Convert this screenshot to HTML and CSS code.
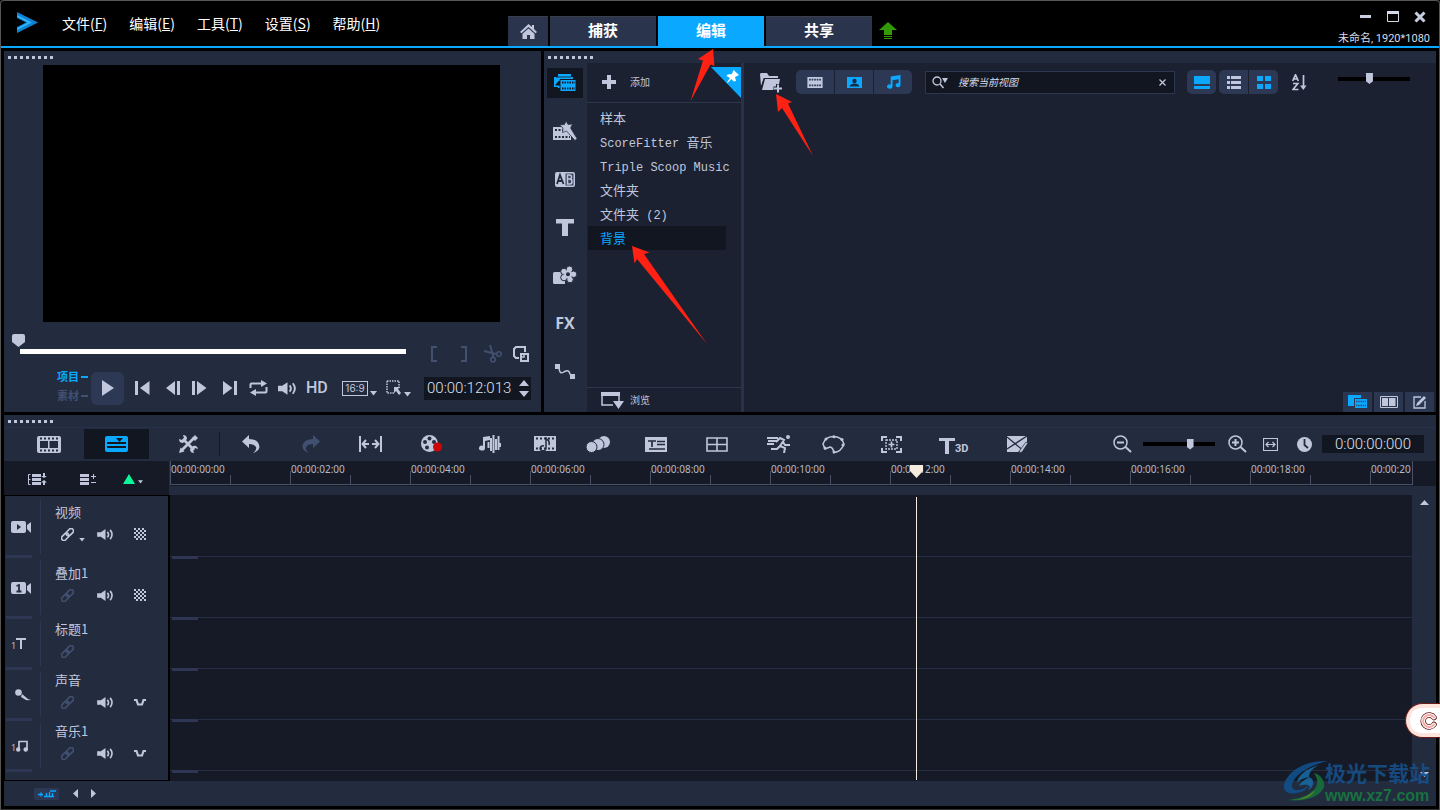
FILE: index.html
```html
<!DOCTYPE html>
<html lang="zh-CN">
<head>
<meta charset="utf-8">
<title>未命名</title>
<link rel="stylesheet" href="styles.css">
</head>
<body>
<svg class="defs" aria-hidden="true">
  <symbol id="link" viewBox="0 0 14 14"><g transform="rotate(-45 7 7)" fill="none" stroke="currentColor" stroke-width="1.8"><rect x="-1" y="4.400" width="9" height="5.200" rx="2.600"/><rect x="6" y="4.400" width="9" height="5.200" rx="2.600"/></g></symbol>
  <symbol id="sound" viewBox="0 0 18 14"><path d="M0 4.500h4L9 1v12L4 9.500H0z" fill="currentColor"/><path d="M11 4q2.500 3 0 6M14 2q4 5 0 10" fill="none" stroke="currentColor" stroke-width="1.800"/></symbol>
  <symbol id="checker" viewBox="0 0 12 12"><path fill="currentColor" d="M0 0h2v2H0zM4 0h2v2H4zM8 0h2v2H8zM2 2h2v2H2zM6 2h2v2H6zM10 2h2v2h-2zM0 4h2v2H0zM4 4h2v2H4zM8 4h2v2H8zM2 6h2v2H2zM6 6h2v2H6zM10 6h2v2h-2zM0 8h2v2H0zM4 8h2v2H4zM8 8h2v2H8zM2 10h2v2H2zM6 10h2v2H6zM10 10h2v2h-2z"/></symbol>
  <symbol id="duck" viewBox="0 0 12 8"><path d="M0 2h2.500L4 6.500h4L9.500 2H12" fill="none" stroke="currentColor" stroke-width="2.200"/></symbol>
  <symbol id="down" viewBox="0 0 7 5"><path d="M0 0h7L3.500 4.500z" fill="currentColor"/></symbol>
  <symbol id="film" viewBox="0 0 18 13"><path fill="currentColor" fill-rule="evenodd" d="M0 0h18v13H0zM2 2v2h2V2zm3 0v2h2V2zm3 0v2h2V2zm3 0v2h2V2zm3 0v2h2V2zM2 9v2h2V9zm3 0v2h2V9zm3 0v2h2V9zm3 0v2h2V9zm3 0v2h2V9z"/></symbol>
  <symbol id="note" viewBox="0 0 16 15"><path d="M5 1.500L15.500 0v11a2.600 2.300 0 1 1-2-2.300V4.500L7 5.500v7a3 2.300 0 1 1-2-2.300z" fill="currentColor"/></symbol>
  <symbol id="media" viewBox="0 0 24 20"><path d="M5 1h13v3h2v3H8v8H5l-.5-1H1V4h4z" fill="currentColor"/><path d="M2 12.500l3-4 2.500-1v5z" fill="#121620"/><path d="M3 4h15" stroke="#121620" stroke-width=".8"/><path d="M7 6.500h16v12H7z" fill="currentColor" stroke="#121620"/><path d="M9 9.500h13M9 15.500h13" stroke="#121620" stroke-width="2" stroke-dasharray="1.500 1"/></symbol>
</svg>

<div class="window">
  <header class="titlebar">
    <nav class="menus" aria-label="菜单">
      <svg class="logo" width="21" height="22" viewBox="0 0 21 22"><path d="M0 0l21 10.500L0 21v-6l9-4.500L0 6z" fill="#0d83d6"/><path d="M0 4l13 6.500L0 17" fill="none" stroke="#35b8ff" stroke-width="1.500"/></svg>
      <a href="#">文件(<u>F</u>)</a><a href="#">编辑(<u>E</u>)</a><a href="#">工具(<u>T</u>)</a><a href="#">设置(<u>S</u>)</a><a href="#">帮助(<u>H</u>)</a>
    </nav>
    <div class="tabs">
      <button class="tab tab-home" aria-label="主页"><svg width="17" height="15" viewBox="0 0 17 15"><path d="M8.500 0L12 3V1h2v4l3 3-1.500 1.300L8.500 3 1.500 9.300 0 8z" fill="#c0c7dd"/><path d="M8.500 4.500L14.500 9.800V15H10v-4H7v4H2.500V9.800z" fill="#c0c7dd"/></svg></button>
      <button class="tab">捕获</button><button class="tab tab-on">编辑</button><button class="tab">共享</button>
      <button class="update" aria-label="更新"><svg width="18" height="18" viewBox="0 0 18 18"><path d="M9 0l9 8h-5v5H5V8H0zM5 14h8v1H5zM5 16h8v1H5z" fill="#329a07"/></svg></button>
    </div>
    <div class="win-side">
      <div class="win-buttons">
        <button aria-label="最小化"><svg width="12" height="12"><path d="M0 4h11v3H0z" fill="#c8cee2"/></svg></button>
        <button aria-label="最大化"><svg width="12" height="12"><path d="M.5 2V10.500h11V2" fill="none" stroke="#d5daea"/><path d="M0 0h12v3H0z" fill="#d5daea"/></svg></button>
        <button aria-label="关闭"><svg width="12" height="12"><path d="M1.500 1.500l9 9m0-9l-9 9" stroke="#c8cee2" stroke-width="3"/></svg></button>
      </div>
      <div class="project">未命名, 1920*1080</div>
    </div>
  </header>

  <main class="top">
    <section class="panel preview">
      <div class="grip"></div>
      <div class="screen"></div>
      <div class="scrub">
        <input class="seek" type="range" min="0" max="100" value="0" aria-label="进度">
        <div class="marks">
          <button class="dim" aria-label="开始标记"><svg width="8" height="16"><path d="M6 1H1v14h5" fill="none" stroke="currentColor" stroke-width="2"/></svg></button>
          <button class="dim" aria-label="结束标记"><svg width="8" height="16"><path d="M1 1h5v14H1" fill="none" stroke="currentColor" stroke-width="2"/></svg></button>
          <button class="dim" aria-label="剪切"><svg width="18" height="18" fill="none" stroke="currentColor" stroke-width="2"><path d="M6 0l3.500 12M0 6l12 3"/><circle cx="9" cy="14.500" r="2.300" stroke-width="1.600"/><circle cx="15" cy="9" r="2.300" stroke-width="1.600"/></svg></button>
          <button aria-label="放大"><svg width="16" height="16" fill="none" stroke="currentColor" stroke-width="2"><path d="M6 12H3L1 10V3l2-2h9v5"/><path d="M8 8h7v7H8z"/><path d="M7 11h4V7" stroke-width="1.500"/></svg></button>
        </div>
      </div>
      <div class="transport">
        <div class="modes"><button class="mode on">项目</button><button class="mode">素材</button></div>
        <button class="play" aria-label="播放"><svg width="12" height="18"><path d="M0 1l12 8-12 8z" fill="currentColor"/></svg></button>
        <div class="deck">
          <button aria-label="起始"><svg width="15" height="14"><path d="M0 0h3v14H0zM14.500 0v14L5 7z" fill="currentColor"/></svg></button>
          <button aria-label="上一帧"><svg width="15" height="14"><path d="M9 0v14L0 7zM11 0h3v14h-3z" fill="currentColor"/></svg></button>
          <button aria-label="下一帧"><svg width="15" height="14"><path d="M0 0h3v14H0zM5 0v14l9.500-7z" fill="currentColor"/></svg></button>
          <button aria-label="结束"><svg width="15" height="14"><path d="M0 0v14l9.500-7zM11 0h3v14h-3z" fill="currentColor"/></svg></button>
          <button aria-label="重复"><svg width="19" height="16"><path d="M1.500 8V4.500q0-1 1-1H13M17.500 7v4.500q0 1-1 1H5" fill="none" stroke="currentColor" stroke-width="2"/><path d="M12 0l6 3.500-6 3.500zM7 9v7l-6-3.500z" fill="currentColor"/></svg></button>
          <button aria-label="音量"><svg width="19" height="15"><use href="#sound"/></svg></button>
          <button class="hd">HD</button>
          <button class="ratio"><span>16:9</span><svg width="7" height="5"><use href="#down"/></svg></button>
          <button class="pick" aria-label="选取"><svg width="16" height="17"><path d="M1 1h12v7M1 1v12h8" fill="none" stroke="currentColor" stroke-width="1.500" stroke-dasharray="1.500 1"/><path d="M8 7h6l-2 2 3 4-2 2-3-4-2 2z" fill="currentColor"/></svg><svg width="7" height="5"><use href="#down"/></svg></button>
          <div class="timebox"><input type="text" value="00:00:12:013" aria-label="时间码"><button class="spin" aria-label="调整"><svg width="10" height="17"><path d="M5 0l5 6H0zM0 11h10l-5 6z" fill="currentColor"/></svg></button></div>
        </div>
      </div>
    </section>

    <section class="panel library">
      <div class="grip"></div>
      <div class="lib-body">
        <nav class="kinds" aria-label="素材类型">
          <button class="kind kind-on" aria-label="媒体"><svg width="24" height="20"><use href="#media"/></svg></button>
          <button class="kind" aria-label="即时项目"><svg width="24" height="20"><path d="M0 6h18v13H0z" fill="currentColor"/><path d="M2 9h8M2 16h15" stroke="#232b3f" stroke-width="2" stroke-dasharray="2 1.500"/><path d="M13 0l2 3.500 4.500-.5-2 4 6.500 10.500-2 2-8.500-9.500-4 1.500.5-4.500L6.500 4l5-.5z" fill="currentColor" stroke="#232b3f" stroke-width=".7"/></svg></button>
          <button class="kind" aria-label="转场"><svg width="20" height="15"><path d="M2 0h16q2 0 2 2v11q0 2-2 2H2q-2 0-2-2V2q0-2 2-2z" fill="currentColor"/><path d="M10.500 1.500H18q.5 0 .5.500v11q0 .5-.5.500h-7.500z" fill="#39435d"/><path d="M2 12L5 3l3.500 9M3 9h4.500" fill="none" stroke="#232b3f" stroke-width="1.800"/><path d="M12.500 3v9h2.500q2 0 2-2.500T15 7q1.500 0 1.500-2T14.500 3zM12.500 7H15" fill="none" stroke="currentColor" stroke-width="1.500"/></svg></button>
          <button class="kind" aria-label="标题"><svg width="18" height="17"><path d="M0 0h18v4.500h-6V17H6V4.500H0z" fill="currentColor"/></svg></button>
          <button class="kind" aria-label="图形"><svg width="24" height="18"><path d="M1.500 6H12v12H1.500Q0 18 0 16.500v-9Q0 6 1.500 6z" fill="currentColor"/><g fill="currentColor" stroke="#232b3f" stroke-width="1"><circle cx="11" cy="5.500" r="3.300"/><circle cx="16.500" cy="3.300" r="3.300"/><circle cx="20.500" cy="8.300" r="3.300"/><circle cx="17" cy="13.500" r="3.300"/><circle cx="11" cy="11.500" r="3.300"/></g><circle cx="15" cy="8.300" r="4.300" fill="currentColor"/><circle cx="15" cy="8.300" r="2" fill="#232b3f"/></svg></button>
          <button class="kind fx">FX</button>
          <button class="kind" aria-label="路径"><svg width="20" height="15"><path d="M0 0h5v5H0zM15 10h5v5h-5z" fill="currentColor"/><path d="M4 4c1 8 4 4 7 3s3 1 5 5" fill="none" stroke="currentColor" stroke-width="1.500"/></svg></button>
        </nav>
        <div class="folders">
          <div class="add-row"><button class="add"><svg width="14" height="14"><path d="M5 0h4v5h5v4H9v5H5V9H0V5h5z" fill="currentColor"/></svg>添加</button>
            <button class="pin" aria-label="固定"><svg width="30" height="31"><path d="M0 0h30v31z" fill="#0aa8ff"/><path d="M22.500 3l5.500 5-2 1-2 1 1 4-2.500.5-2-2.500-4 4-.5-.5L19 11l-3.500-2 1-1.500 4.500-.5z" fill="#fff"/></svg></button></div>
          <ul class="folder-list">
            <li><a href="#">样本</a></li>
            <li><a href="#"><span>ScoreFitter </span>音乐</a></li>
            <li><a href="#"><span>Triple Scoop Music</span></a></li>
            <li><a href="#">文件夹</a></li>
            <li><a href="#">文件夹<span> (2)</span></a></li>
            <li class="chosen"><a href="#">背景</a></li>
          </ul>
          <button class="browse"><svg width="23" height="17"><path d="M1 3v10h11M18 3v6" fill="none" stroke="currentColor" stroke-width="1.500"/><path d="M0 0h19v4H0zM12 9h11l-5.500 8z" fill="currentColor"/></svg>浏览</button>
        </div>
        <div class="content">
          <div class="lib-tools">
            <button class="import" aria-label="导入媒体文件"><svg width="23" height="23"><path d="M1 14L0 2l1-1h6l2 3h9v2H4z" fill="currentColor"/><path d="M5 7h15l-2 11H2z" fill="currentColor"/><path d="M1 17L4 6.500h16" fill="none" stroke="#1b2130"/><path d="M18 12v9M13.500 16.500h9" stroke="#1b2130" stroke-width="4"/><path d="M18 12.500v8M14 16.500h8" stroke="currentColor" stroke-width="2"/></svg></button>
            <div class="group filters">
              <button aria-label="视频"><svg width="16" height="11"><use href="#film"/></svg></button>
              <button class="blue" aria-label="照片"><svg width="15" height="11"><path d="M0 0h15v11H0z" fill="currentColor"/><circle cx="7.500" cy="4" r="2.200" fill="#1d2b45"/><path d="M2.500 9.500q1-3 5-3t5 3z" fill="#1d2b45"/></svg></button>
              <button class="blue" aria-label="音频"><svg width="15" height="14"><use href="#note"/></svg></button>
            </div>
            <label class="search"><svg width="17" height="13"><circle cx="5" cy="5" r="4" fill="none" stroke="#c0c7dd" stroke-width="1.300"/><path d="M8 8l3.500 4" stroke="#c0c7dd" stroke-width="1.500"/><path d="M10 2h6l-3 5z" fill="#c0c7dd"/></svg><input type="text" placeholder="搜索当前视图" aria-label="搜索当前视图"><button aria-label="清除"><svg width="7" height="7"><path d="M.5.5l6 6m0-6l-6 6" stroke="#c0c7dd" stroke-width="1.300"/></svg></button></label>
            <div class="group views-a"><button class="blue" aria-label="隐藏标题"><svg width="16" height="13"><path d="M0 0h16v8H0zM0 10h16v3H0z" fill="currentColor"/></svg></button></div>
            <div class="group views"><button aria-label="列表视图"><svg width="14" height="13"><path d="M0 0h3v3H0zM4 0h10v3H4zM0 5h3v3H0zM4 5h10v3H4zM0 10h3v3H0zM4 10h10v3H4z" fill="currentColor"/></svg></button><button class="blue" aria-label="缩略图视图"><svg width="14" height="13"><path d="M0 0h6v5H0zM8 0h6v5H8zM0 8h6v5H0zM8 8h6v5H8z" fill="currentColor"/></svg></button></div>
            <button class="sort" aria-label="排序"><svg width="15" height="17" fill="none" stroke="currentColor" stroke-width="1.700"><path d="M.7 7L3.500.8 6.300 7M1.500 5h4M1 9.500h4.800L1 15.500h5.500M11.500 1v12"/><path d="M8 11.500h6.500L11.300 16z" fill="currentColor" stroke="none"/></svg></button>
            <input class="slider size" type="range" min="0" max="100" value="43" aria-label="缩略图大小">
          </div>
          <div class="lib-tabs">
            <button class="blue" aria-label="素材库"><svg width="20" height="15"><path d="M0 0h13v5H6v6H0z" fill="currentColor"/><path d="M6.500 3.500h13v10h-13z" fill="currentColor" stroke="#2b3650"/><path d="M8 6.500h10M8 10.500h10" stroke="#25557f" stroke-width="1.500" stroke-dasharray="1.500 .7"/></svg></button>
            <button aria-label="双栏"><svg width="18" height="12"><path d="M.5.500h17v11H.5z" fill="none" stroke="currentColor"/><path d="M2 2h6v8H2zM9 2h6.500v8H9z" fill="currentColor"/></svg></button>
            <button aria-label="选项"><svg width="13" height="13"><path d="M8 1H1v11h11V5" fill="none" stroke="currentColor" stroke-width="1.300"/><path d="M3 10l1-3 7-7 2 2-7 7z" fill="currentColor"/></svg></button>
          </div>
        </div>
      </div>
    </section>
  </main>

  <section class="panel timeline">
    <div class="grip"></div>
    <div class="toolbar">
      <button class="story" aria-label="故事板视图"><svg width="24" height="17"><path fill="currentColor" d="M2 0h20q2 0 2 2v13q0 2-2 2H2q-2 0-2-2V2q0-2 2-2z"/><path fill="#232b3f" d="M3 5h8v7H3zM12.500 5H21v7h-8.500z"/><path d="M3 2.500h19M3 14.500h19" stroke="#232b3f" stroke-width="2" stroke-dasharray="2 2"/></svg></button>
      <button class="timeline-view blue" aria-label="时间轴视图"><svg width="23" height="16"><path fill="currentColor" d="M2 0h19q2 0 2 2v12q0 2-2 2H2q-2 0-2-2V2q0-2 2-2z"/><path d="M2 7h19M2 11h19" stroke="#121620" stroke-width="2"/><path d="M11 2h7l-3.500 4z" fill="#121620"/></svg></button>
      <button class="custom" aria-label="自定义工具栏"><svg width="19" height="18"><path d="M4 4l11 11M15 3L3 15" stroke="currentColor" stroke-width="2.800"/><path d="M4 0l1 3-2 2-3-1Q0 8 4 8l4-4Q8 0 4 0zM11 14q0 4 4 4l-1-3 2-2 3 1Q18 10 14 11zM13 3l3-3 3 3-3 3zM0 18l1.500-5.500 4 4z" fill="currentColor"/></svg></button>
      <div class="tools">
        <button aria-label="撤销"><svg width="18" height="18"><path d="M0 6.500L7 0v4q10 0 10.500 8-.5 4-6.500 6 4-3 3-6-2-3-7-3v4z" fill="currentColor"/></svg></button>
        <button class="dim" aria-label="重复"><svg width="18" height="18"><path d="M18 6.500L11 0v4Q1 4 .5 12q.5 4 6.500 6-4-3-3-6 2-3 7-3v4z" fill="currentColor"/></svg></button>
        <button aria-label="适应宽度"><svg width="23" height="16"><path d="M1 0v16M22 0v16M3 8h7M13 8h7" stroke="currentColor" stroke-width="2"/><path d="M7 4L3.500 8 7 12M16 4l3.500 4L16 12" fill="none" stroke="currentColor" stroke-width="2"/></svg></button>
        <button aria-label="录制/捕获选项"><svg width="22" height="18"><circle cx="8.500" cy="8.500" r="8.500" fill="currentColor"/><g fill="#232b3f"><circle cx="8.500" cy="3.500" r="2"/><circle cx="4" cy="7" r="2"/><circle cx="13" cy="7" r="2"/><circle cx="6" cy="12.500" r="2"/></g><circle cx="16.500" cy="12" r="4.500" fill="#cc0606"/></svg></button>
        <button aria-label="混音器"><svg width="23" height="18"><path d="M5 2l7-1v4L7 6v7a3 2.500 0 1 1-2-2.300z" fill="currentColor"/><path d="M10.500 7v6M13 3v13M15.500 0v18M18 4v11M20.500 1v14M22.500 8v4" stroke="currentColor" stroke-width="2"/></svg></button>
        <button aria-label="自动音乐"><svg width="22" height="16"><path d="M0 0h22v15H0z" fill="currentColor"/><path d="M2 2.500h18M2 12.500h18" stroke="#232b3f" stroke-width="2" stroke-dasharray="2 2"/><path d="M12 1v11a3 2.500 0 1 1-2-2M12 3q4 1 3 6" fill="none" stroke="#232b3f" stroke-width="1.500"/></svg></button>
        <button aria-label="运动追踪"><svg width="24" height="17"><circle cx="18" cy="6" r="6" fill="currentColor"/><circle cx="12" cy="8.500" r="6" fill="currentColor" stroke="#232b3f"/><circle cx="5.500" cy="11" r="5.500" fill="currentColor" stroke="#232b3f"/></svg></button>
        <button aria-label="字幕编辑器"><svg width="22" height="15"><path d="M0 0h22v15H0z" fill="currentColor"/><path d="M3 4h8M7 4v6M12 4.500h8M12 7.500h8M4 12h16" stroke="#232b3f" stroke-width="1.700"/></svg></button>
        <button aria-label="多相机编辑器"><svg width="22" height="15"><path d="M1 1h20v13H1zM1 7.500h20M11 1v13" fill="none" stroke="currentColor" stroke-width="1.600"/></svg></button>
        <button aria-label="重新映射时间"><svg width="24" height="18"><circle cx="21" cy="2" r="2" fill="currentColor"/><path d="M0 3h11M1 6h9M0 9h7M9 7l4-4 4 2-4 6 5 2-1 5M13 11l-3 3H4M16 7l2 3h5" fill="none" stroke="currentColor" stroke-width="2"/></svg></button>
        <button aria-label="遮罩创建器"><svg width="23" height="19"><path d="M3 14L1 9q2-7 10-7.500 9 0 11 7.500-3 8-10 8.500-1-5-4-5.500z" fill="none" stroke="currentColor" stroke-width="1.500"/><g fill="currentColor"><circle cx="3" cy="13" r="1.500"/><circle cx="4" cy="4" r="1.500"/><circle cx="12" cy="1.800" r="1.500"/><circle cx="20" cy="4.500" r="1.500"/><circle cx="21" cy="10" r="1.500"/><circle cx="12" cy="17" r="1.500"/></g></svg></button>
        <button aria-label="平移和缩放"><svg width="21" height="17"><path d="M1 5V1h5M15 1h5v4M20 12v4h-5M6 16H1v-4" fill="none" stroke="currentColor" stroke-width="2"/><path d="M5 4h11v9H5z" fill="none" stroke="currentColor" stroke-width="1.400" stroke-dasharray="2 1"/><path d="M7.500 8.500h6M10.500 5.500v6" stroke="currentColor" stroke-width="1.700"/></svg></button>
        <button class="t3d" aria-label="3D 标题编辑器"><svg width="16" height="16"><path d="M0 0h16v3h-6v13H6V3H0z" fill="currentColor"/></svg><span>3D</span></button>
        <button aria-label="分屏模板创建器"><svg width="23" height="17"><path d="M0 0h20v8l-9 8H0z" fill="currentColor"/><path d="M0 1l18 15M20 0L0 13" stroke="#232b3f" stroke-width="1.300"/><path d="M21 7l-6 9-3 1 1-3 6-8z" fill="currentColor" stroke="#232b3f" stroke-width=".7"/></svg></button>
      </div>
      <div class="zoomers">
        <button aria-label="缩小"><svg width="19" height="18" fill="none" stroke="currentColor"><circle cx="7.500" cy="7.500" r="6.500" stroke-width="1.500"/><path d="M4 7.500h7" stroke-width="2"/><path d="M12.500 12l5.500 5" stroke-width="2"/></svg></button>
        <input class="slider" type="range" min="0" max="100" value="67" aria-label="缩放">
        <button aria-label="放大"><svg width="19" height="18" fill="none" stroke="currentColor"><circle cx="7.500" cy="7.500" r="6.500" stroke-width="1.500"/><path d="M4 7.500h7M7.500 4v7" stroke-width="2"/><path d="M12.500 12l5.500 5" stroke-width="2"/></svg></button>
        <button aria-label="将项目调到时间轴窗口大小"><svg width="15" height="13"><path d="M.5.500h14v12H.5zM3 6.500h9M5.500 4L3 6.500 5.500 9M9.500 4L12 6.500 9.500 9" fill="none" stroke="currentColor" stroke-width="1.200"/></svg></button>
        <button class="clock" aria-label="项目区间"><svg width="15" height="15"><circle cx="7.500" cy="7.500" r="7.500" fill="currentColor"/><path d="M7.500 2v6l3.500 3" fill="none" stroke="#232b3f" stroke-width="1.800"/></svg></button>
        <input class="duration" type="text" value="0:00:00:000" aria-label="项目区间">
      </div>
    </div>

    <div class="ruler-row">
      <div class="track-tools">
        <button aria-label="显示全部可视化轨道"><svg width="20" height="13"><path d="M4 1h9v3H4zM4 5h9v3H4zM4 9h9v3H4zM16 5l-3-2h2V0h2v3h2zM16 7l3 2.500h-2V12h-2V9.500h-2z" fill="currentColor"/><path d="M2.500 1.500h-2v10h2M.5 6.500h2" fill="none" stroke="currentColor"/></svg></button>
        <button aria-label="添加/减少轨道"><svg width="17" height="13"><path d="M0 1h9v3H0zM0 5h9v3H0zM0 9h9v3H0z" fill="currentColor"/><path d="M11 3.500h5M13.500 1v5M11 9.500h5" stroke="currentColor"/></svg></button>
        <button class="marker" aria-label="章节点"><svg width="12" height="10"><path d="M6 0l6 10H0z" fill="#0cf79a"/></svg><svg width="5" height="4"><use href="#down"/></svg></button>
      </div>
      <div class="ruler-wrap">
        <div class="ruler"><span>00:00:00:00</span><span>00:00:02:00</span><span>00:00:04:00</span><span>00:00:06:00</span><span>00:00:08:00</span><span>00:00:10:00</span><span>00:00:12:00</span><span>00:00:14:00</span><span>00:00:16:00</span><span>00:00:18:00</span><span>00:00:20</span></div>
      </div>
    </div>

    <div class="tracks">
      <div class="heads">
        <div class="head tall"><div class="type"><svg width="21" height="12"><path d="M2 0h11q2 0 2 2v8q0 2-2 2H2q-2 0-2-2V2q0-2 2-2zM20 1v11l-4-4V4z" fill="currentColor"/><path d="M6 3l4 3-4 3z" fill="#232b3f"/></svg></div>
          <div class="info"><div>视频</div><div class="switches"><button class="with-arrow" aria-label="链接"><svg width="13" height="13"><use href="#link"/></svg><svg width="6" height="4"><use href="#down"/></svg></button><button aria-label="静音"><svg width="17" height="13"><use href="#sound"/></svg></button><button aria-label="透明度"><svg width="12" height="12"><use href="#checker"/></svg></button></div></div></div>
        <div class="head tall"><div class="type"><svg width="21" height="12"><path d="M2 0h11q2 0 2 2v8q0 2-2 2H2q-2 0-2-2V2q0-2 2-2zM20 1v11l-4-4V4z" fill="currentColor"/><path d="M5.500 4L8 3v7M5.500 9.500h5" fill="none" stroke="#232b3f" stroke-width="1.800"/></svg></div>
          <div class="info"><div>叠加1</div><div class="switches"><button class="dim" aria-label="链接"><svg width="13" height="13"><use href="#link"/></svg></button><button aria-label="静音"><svg width="17" height="13"><use href="#sound"/></svg></button><button aria-label="透明度"><svg width="12" height="12"><use href="#checker"/></svg></button></div></div></div>
        <div class="head"><div class="type"><small>1</small><svg width="10" height="11"><path d="M0 0h10v2H6v9H4V2H0z" fill="currentColor"/></svg></div>
          <div class="info"><div>标题1</div><div class="switches"><button class="dim" aria-label="链接"><svg width="13" height="13"><use href="#link"/></svg></button></div></div></div>
        <div class="head"><div class="type mic"><svg width="17" height="12"><circle cx="3.500" cy="3.500" r="3.300" fill="currentColor"/><path d="M7 5l6 5q2 1 3.500 0-2 2-6 .7L6 8z" fill="currentColor"/></svg></div>
          <div class="info"><div>声音</div><div class="switches"><button class="dim" aria-label="链接"><svg width="13" height="13"><use href="#link"/></svg></button><button aria-label="静音"><svg width="17" height="13"><use href="#sound"/></svg></button><button aria-label="闪避"><svg width="12" height="8"><use href="#duck"/></svg></button></div></div></div>
        <div class="head"><div class="type"><small>1</small><svg width="12" height="12"><path d="M3 1.500h8v8.500M3 1v9" fill="none" stroke="currentColor" stroke-width="1.700"/><circle cx="2.200" cy="9.500" r="2.200" fill="currentColor"/><circle cx="9.700" cy="9.500" r="2.200" fill="currentColor"/></svg></div>
          <div class="info"><div>音乐1</div><div class="switches"><button class="dim" aria-label="链接"><svg width="13" height="13"><use href="#link"/></svg></button><button aria-label="静音"><svg width="17" height="13"><use href="#sound"/></svg></button><button aria-label="闪避"><svg width="12" height="8"><use href="#duck"/></svg></button></div></div></div>
      </div>
      <div class="lanes"><div class="lane tall"></div><div class="lane tall"></div><div class="lane"></div><div class="lane"></div><div class="lane"></div></div>
      <div class="vscroll"><button aria-label="向上"><svg width="9" height="5"><path d="M4.500 0L9 5H0z" fill="currentColor"/></svg></button><button aria-label="向下"><svg width="9" height="5"><path d="M0 0h9L4.500 5z" fill="currentColor"/></svg></button></div>
      <svg class="playhead" width="13" height="315"><path d="M0 0h13v6l-6.500 7L0 6zM6 32h1v283H6z" fill="#f5ecdf"/></svg>
    </div>

    <div class="footer">
      <button class="auto" aria-label="自动滚动"><svg width="18" height="8"><path d="M0 4.500h5M3 2.500v4M6 6.500h10M8.500 3v4M11.500 2v5M14.500 3v4M12 1h6" fill="none" stroke="#0aa8ff" stroke-width="1.300"/></svg></button>
      <button aria-label="向左"><svg width="5" height="9"><path d="M5 0v9L0 4.500z" fill="currentColor"/></svg></button>
      <button aria-label="向右"><svg width="5" height="9"><path d="M0 0v9l5-4.500z" fill="currentColor"/></svg></button>
    </div>
  </section>
</div>

<svg class="arrows" width="1440" height="810" aria-hidden="true"><g fill="#ff2113"><path d="M713 49L698 59l5 1.500L690.500 101 710.500 64.500l4 1.500z"/><path d="M776 94l16 8-4 1.500L813 156l-31-48-4 4z"/><path d="M632 246l17.500 6.500-5.500 1.500 63 90-70-85-2.500 4.500z"/></g></svg>

<div class="watermark">
  <svg width="46" height="42" viewBox="0 0 46 42"><path d="M45 1C25 0 6 9 1 24c-1 8 5 11 13 9 6-1 11-4 11-8-3 5-16 8-16 1C10 15 27 5 45 1z" fill="#11508a"/><path d="M36 5C22 9 14 17 14 23q4-5 13-6c-6 3-9 5-11 9 9-3 14 0 8 5 8-4 8-12 2-14 0-5 4-9 10-12z" fill="#1768a0"/><path d="M31 13c8 2 11 9 10 14-4 10-19 15-37 13 15-1 29-8 30-16 1-4-1-8-3-11z" fill="#16703c"/><path d="M7 40c12 0 20-4 25-10-3 6-9 10-25 10z" fill="#8a9b17"/></svg>
  <div><strong>极光下载站</strong><span>www.xz7.com</span></div>
</div>
<button class="bubble" aria-label="助手"><svg width="18" height="20" fill="none" stroke-linecap="round"><path d="M14 6.500a6 6 0 1 0 0 7" stroke="#5d1616" stroke-width="5.500"/><path d="M14 6.500a6 6 0 1 0 0 7" stroke="#fff" stroke-width="4"/><path d="M14 6.500a6 6 0 1 0 0 7" stroke="#f5a9a4" stroke-width="2"/></svg></button>
</body>
</html>
```
FILE: styles.css
```css
:root {
  --panel: #232b3f;
  --dark: #1b2130;
  --deep: #151a26;
  --well: #121620;
  --raised: #2d3854;
  --icon: #c0c7dd;
  --blue: #0aa8ff;
  --faint: #42506f;
}
* { box-sizing: border-box; }
body {
  margin: 0;
  background: #000;
  color: var(--icon);
  font: 12px/16px "Noto Sans", "Noto Sans CJK SC", sans-serif;
  position: relative;
  overflow: hidden;
}
button, input { font: inherit; color: inherit; }
button { background: none; border: 0; padding: 0; display: flex; align-items: center; }
button.dim { color: var(--faint); }
button.blue { color: var(--blue); }
input { min-width: 0; border: 0; padding: 0; outline: 0; background: none; }
a { color: inherit; text-decoration: none; }
svg { display: block; flex: none; }
.defs { position: absolute; width: 0; height: 0; }

.window {
  min-height: 100vh;
  display: flex;
  flex-direction: column;
  border: 1px solid #555;
  border-bottom-color: #333;
  border-radius: 4px 4px 0 0;
  padding: 0 3px 3px;
}
.titlebar {
  display: grid;
  grid-template-columns: 504px auto 1fr;
  height: 47px;
  margin: 0 -3px 3px;
  padding-left: 3px;
  border-bottom: 2px solid var(--blue);
}
.menus { display: flex; align-items: flex-start; gap: 22px; padding: 11px 0 0 13px; color: #fff; font: 14px/22px "Noto Sans CJK SC", sans-serif; }
.menus .logo { margin-right: 2px; }
.menus a { white-space: nowrap; }
.tabs { display: flex; align-items: flex-end; gap: 2px; }
.tab { width: 106px; height: 30px; justify-content: center; background: #2a344c; color: #fff; font: bold 15px/22px "Noto Sans CJK SC", sans-serif; border-top: 1px solid #3b3f49; padding-bottom: 4px; }
.tab-home { width: 40px; padding-bottom: 0; }
.tab-on { background: var(--blue); border-color: var(--blue); }
.update { height: 30px; padding-left: 5px; }
.win-side { display: flex; flex-direction: column; align-items: flex-end; padding: 10px 9px 0 0; gap: 9px; }
.win-buttons { display: flex; gap: 15px; padding-right: 4px; }
.project { color: #d7dbe6; font: 11px/14px Roboto, "Noto Sans CJK SC", sans-serif; }

.top { display: grid; grid-template-columns: 537fr 892fr; gap: 3px; height: 361px; margin-bottom: 3px; }
.panel { background: var(--panel); display: flex; flex-direction: column; min-width: 0; }
.grip { flex: none; height: 12px; padding: 5px 4px; }
.grip::before { content: ""; display: block; width: 45px; height: 3px; background: repeating-linear-gradient(90deg, var(--icon) 0 3px, transparent 3px 6px); }

.screen { flex: 1; margin: 2px 41px 0 39px; background: #000; }
.scrub { display: flex; height: 42px; padding: 12px 12px 0 8px; }
.seek { flex: 1; appearance: none; height: 20px; margin: 0 18px 0 0; background: linear-gradient(#fff, #fff) 8px 15px / calc(100% - 8px) 5px no-repeat; }
.seek::-webkit-slider-runnable-track { height: 20px; }
.seek::-webkit-slider-thumb { appearance: none; width: 13px; height: 13px; border-radius: 2px; background: var(--icon); clip-path: polygon(0 0, 100% 0, 100% 62%, 50% 100%, 0 62%); }
.marks { display: grid; grid-template-columns: 29px 24px 29px 16px; margin-left: 7px; padding-top: 11px; height: 28px; align-items: center; }
.transport { display: flex; align-items: center; height: 48px; padding: 0 10px 0 53px; }
.modes { width: 34px; display: flex; flex-direction: column; gap: 2px; padding-bottom: 4px; }
.mode { font: bold 11px/17px "Noto Sans CJK SC", sans-serif; color: var(--faint); white-space: nowrap; gap: 2px; }
.mode::after { content: ""; width: 7px; height: 2px; background: currentColor; }
.mode.on { color: var(--blue); }
.play { width: 33px; height: 33px; border-radius: 6px; background: var(--raised); justify-content: center; }
.deck { display: grid; grid-template-columns: 31px 26px 31px 26px 29px 28px 36px 44px 38px 107px; align-items: center; margin-left: 11px; }
.hd { font: 500 16px/18px Roboto, sans-serif; }
.ratio { gap: 2px; align-items: flex-end; }
.ratio span { border: 1px solid var(--icon); font: 10px/13px Inter, sans-serif; width: 26px; text-align: center; }
.pick { gap: 2px; align-items: flex-end; }
.timebox { display: flex; height: 23px; background: var(--well); padding: 0 2px 0 3px; font: 300 15px/23px Roboto, sans-serif; }
.timebox input { flex: 1; }
.spin { padding-left: 2px; }
.timebox input, .duration { color: #dfe3f0; }

.lib-body { flex: 1; display: grid; grid-template-columns: 43px 157px 1fr; min-height: 0; }
.kinds { padding: 5px 3px; display: flex; flex-direction: column; gap: 18px; }
.kind { width: 36px; height: 30px; justify-content: center; }
.kind-on { background: var(--well); color: var(--blue); }
.fx { font: bold 16px/20px "Open Sans", sans-serif; }
.folders { background: var(--dark); border-right: 3px solid #29324a; display: flex; flex-direction: column; }
.add-row { display: flex; justify-content: space-between; height: 40px; border-bottom: 1px solid #2c3549; padding-left: 15px; }
.add { gap: 14px; font: 10px/16px "Noto Sans CJK SC", sans-serif; height: 37px; }
.pin { align-items: flex-start; padding-top: 4px; }
.folder-list { flex: 1; list-style: none; margin: 3px 0 0; padding: 0 15px 0 1px; font: 13px/24px "Noto Sans CJK SC", sans-serif; }
.folder-list li { padding-left: 12px; height: 24px; white-space: pre; }
.folder-list a { display: block; }
.folder-list span { font: 12px/24px "Liberation Mono", monospace; }
.folder-list .chosen { background: var(--well); color: var(--blue); }
.browse { border-top: 1px solid #2c3549; height: 25px; padding-left: 14px; gap: 6px; font: 10px/16px "Noto Sans CJK SC", sans-serif; }
.content { background: var(--dark); display: flex; flex-direction: column; justify-content: space-between; min-width: 0; }
.lib-tools { display: flex; align-items: center; padding: 7px 26px 0 16px; height: 31px; }
.import { width: 36px; padding-top: 2px; }
.group { display: flex; gap: 1px; height: 24px; border-radius: 5px; overflow: hidden; }
.group button { width: 29px; justify-content: center; background: var(--raised); }
.group.filters button { width: 38px; }
.search { flex: 1; display: flex; align-items: center; height: 23px; margin: 0 12px 0 13px; border: 1px solid #2b3650; background: var(--well); padding: 0 8px 0 6px; }
.search input { flex: 1; padding-left: 9px; font: italic 10px/16px "Noto Sans CJK SC", sans-serif; }
.search input::placeholder { color: #d5daea; }
.views { margin-left: 3px; }
.sort { margin: 0 31px 0 14px; }
.slider { appearance: none; width: 72px; height: 12px; margin: 0; background: linear-gradient(#000, #000) 0 4px / 100% 4px no-repeat; }
.slider::-webkit-slider-thumb { appearance: none; width: 7px; height: 11px; background: var(--icon); clip-path: polygon(0 0, 100% 0, 100% 75%, 50% 100%, 0 75%); }
.size { margin-bottom: 7px; }
.lib-tabs { display: flex; justify-content: flex-end; gap: 2px; padding-right: 2px; }
.lib-tabs button { width: 29px; height: 20px; background: #2b3650; justify-content: center; }

.timeline { flex: 1; position: relative; }
.toolbar { height: 34px; display: flex; align-items: center; border-top: 1px solid #26304a; padding-bottom: 1px; }
.story { width: 80px; padding-left: 33px; }
.timeline-view { width: 65px; height: 30px; justify-content: center; background: var(--well); }
.custom { width: 71px; height: 24px; justify-content: center; padding-left: 8px; border-right: 1px solid var(--deep); }
.tools { display: grid; grid-template-columns: 60px 57px 62px 57px 56px 52px 59px 61px 61px 55px 59px 58px 68px 23px; padding-left: 22px; }
.t3d { align-items: flex-end; }
.t3d span { font: bold 11px/10px Roboto, sans-serif; }
.zoomers { display: flex; align-items: center; margin-left: auto; padding-right: 12px; }
.zoomers .slider { margin: 0 13px 0 11px; }
.zoomers button + button { margin-left: 16px; }
.zoomers button.clock { margin-left: 19px; }
.duration { width: 102px; height: 18px; margin-left: 10px; background: var(--well); text-align: center; font: 300 15px/18px Roboto, sans-serif; }

.ruler-row { display: grid; grid-template-columns: 166px minmax(0, 1fr); height: 34px; }
.track-tools { background: var(--deep); display: grid; grid-template-columns: 52px 43px 20px; align-items: center; padding: 2px 0 0 24px; margin-right: 1px; }
.marker { align-items: flex-end; gap: 3px; }
.ruler-wrap { background: var(--deep); height: 25px; padding-right: 23px; }
.ruler { display: flex; height: 24px; overflow: hidden; border: solid #4b5069; border-width: 0 1px 1px; }
.ruler span { flex: 0 0 120px; font: 10px/16px "Noto Sans", sans-serif; color: #b5bac6; background: linear-gradient(#4b5069, #4b5069) 119px 10px / 1px 14px no-repeat, linear-gradient(#4b5069, #4b5069) 59px 14px / 1px 10px no-repeat; }

.tracks { flex: 1; display: grid; grid-template-columns: 166px minmax(0, 1fr) 24px; position: relative; }
.heads { border: 1px solid #000; border-right-width: 2px; }
.head { display: grid; grid-template-columns: 36px 1fr; height: 51px; padding: 3px 0; position: relative; }
.head.tall { height: 61px; }
.head::after, .lane::after { content: ""; position: absolute; left: 1px; bottom: -1px; width: 26px; height: 3px; background: #2d3753; }
.type { display: flex; align-items: center; padding-left: 6px; border-right: 1px solid #2d3753; }
.type small { font: 9px/10px "Open Sans", sans-serif; align-self: center; padding-top: 4px; }
.mic { padding-left: 10px; }
.info { padding-left: 14px; font: 13px/16px "Noto Sans CJK SC", sans-serif; display: flex; flex-direction: column; gap: 6px; }
.tall .info { padding-top: 5px; }
.switches { display: grid; grid-template-columns: 36px 37px 12px; padding-left: 6px; height: 16px; align-items: center; }
.with-arrow { gap: 5px; }
.with-arrow svg + svg { margin-top: 12px; }
.lanes { background: var(--deep); }
.lane { height: 51px; border-bottom: 1px solid #262e44; position: relative; }
.lane.tall { height: 61px; }
.lane:first-child { height: 62px; }
.lane::after { left: 2px; bottom: -3px; }
.vscroll { display: flex; flex-direction: column; justify-content: space-between; align-items: center; padding: 5px 0 4px; }
.playhead { position: absolute; left: 906px; top: -30px; }
.footer { display: flex; align-items: center; height: 25px; padding-left: 30px; }
.auto { width: 25px; height: 12px; border-radius: 2px; background: var(--raised); justify-content: center; margin-right: 14px; }
.auto + button { margin-right: 13px; }

.arrows { position: absolute; left: 0; top: 0; pointer-events: none; }
.watermark { position: absolute; right: 10px; bottom: 5px; display: flex; align-items: center; opacity: .9; }
.watermark div { display: flex; flex-direction: column; margin-left: -4px; }
.watermark strong { font: bold 21px/30px "Noto Sans CJK SC", sans-serif; color: #174f88; }
.watermark span { font: bold 16px/18px "Liberation Sans", sans-serif; color: #177a40; }
.bubble { position: absolute; right: 0; top: 703px; width: 35px; height: 35px; border: 1px solid #6b1c16; border-right: 0; border-radius: 18px 0 0 18px; background: #fff; box-shadow: inset 4px 0 0 #fce3dc, inset 0 4px 0 #fce3dc, inset 0 -4px 0 #fce3dc; padding-left: 14px; }
```
